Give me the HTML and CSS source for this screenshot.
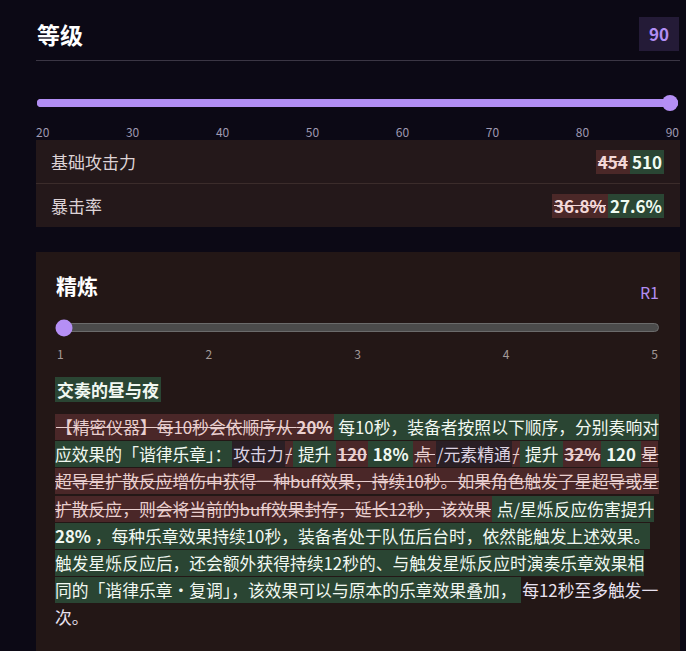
FILE: index.html
```html
<!DOCTYPE html>
<html lang="zh-CN">
<head>
<meta charset="utf-8">
<title>武器详情</title>
<link rel="stylesheet" href="styles.css">
</head>
<body>
<div class="page">
  <section class="level">
    <header class="level-head">
      <h2 class="level-title">等级</h2>
      <span class="badge">90</span>
    </header>
    <div class="slider slider-level">
      <div class="track"><div class="fill" style="width:100%"></div><span class="thumb" style="left:100%"></span></div>
    </div>
    <div class="ticks ticks-level">
      <span>20</span><span>30</span><span>40</span><span>50</span><span>60</span><span>70</span><span>80</span><span>90</span>
    </div>
  </section>

  <div class="stats">
    <div class="stat-row">
      <span class="stat-name">基础攻击力</span>
      <span class="stat-val"><del class="old">454</del><ins class="new">510</ins></span>
    </div>
    <div class="stat-row">
      <span class="stat-name">暴击率</span>
      <span class="stat-val"><del class="old">36.8%</del><ins class="new">27.6%</ins></span>
    </div>
  </div>

  <section class="card">
    <header class="card-head">
      <h3 class="card-title">精炼</h3>
      <span class="rank">R1</span>
    </header>
    <div class="slider slider-refine">
      <div class="track"><span class="thumb" style="left:0%"></span></div>
    </div>
    <div class="ticks ticks-refine">
      <span>1</span><span>2</span><span>3</span><span>4</span><span>5</span>
    </div>
    <h4 class="passive"><span class="add">交奏的昼与夜</span></h4>
    <p class="desc"><del class="rm">【精密仪器】每10秒会依顺序从 <b>20%</b></del><ins class="add"> 每10秒，装备者按照以下顺序，分别奏响对<br>应效果的「谐律乐章」：</ins><span class="keep">攻击力</span><del class="rm">/</del><ins class="add"> 提升 </ins><del class="rm"><b>120</b></del><ins class="add"> <b>18%</b> </ins><del class="rm">点 </del><span class="keep">/元素精通</span><del class="rm">/</del><ins class="add"> 提升 </ins><del class="rm"><b>32%</b></del><ins class="add"> <b>120</b> </ins><del class="rm">星<br>超导星扩散反应增伤中获得一种buff效果，持续10秒。如果角色触发了星超导或星<br>扩散反应，则会将当前的buff效果封存，延长12秒，该效果</del><ins class="add"> 点/星烁反应伤害提升<br><b>28%</b> ，每种乐章效果持续10秒，装备者处于队伍后台时，依然能触发上述效果。<br>触发星烁反应后，还会额外获得持续12秒的、与触发星烁反应时演奏乐章效果相<br>同的「谐律乐章・复调」，该效果可以与原本的乐章效果叠加， </ins><span class="plain">每12秒至多触发一<br>次。</span></p>
  </section>
</div>
</body>
</html>
```

FILE: styles.css
```css
* { box-sizing: border-box; }

html, body {
  margin: 0;
  background: #0c0915;
}

body {
  font-family: "Noto Sans CJK SC", "Noto Sans", sans-serif;
  color: #e6e0ea;
}

.page {
  padding: 17px 6px 0 36px;
}

/* level header */
.level-head {
  display: flex;
  justify-content: space-between;
  align-items: center;
  padding-bottom: 9px;
  border-bottom: 1px solid #3b3644;
}

.level-title {
  margin: 0;
  padding-left: 1px;
  font-size: 23px;
  font-weight: 700;
  color: #ffffff;
  line-height: 30px;
}

.badge {
  height: 34px;
  line-height: 34px;
  padding: 0 10px;
  margin-right: 1px;
  background: #241b37;
  color: #b28ef3;
  font-size: 17px;
  font-weight: 700;
}

/* sliders */
.slider {
  position: relative;
  display: flex;
  align-items: center;
}

.track {
  position: relative;
  width: 100%;
  border-radius: 5px;
}

.fill {
  height: 100%;
  border-radius: 5px;
  background: #b28ef3;
}

.thumb {
  position: absolute;
  top: 50%;
  border-radius: 50%;
  background: #b58ff5;
  transform: translate(-50%, -50%);
}

.slider-level {
  height: 16px;
  margin-top: 34px;
  padding-left: 1px;
  padding-right: 2px;
}

.slider-level .track {
  height: 8px;
  background: #b28ef3;
}

.slider-level .thumb {
  width: 16px;
  height: 16px;
  margin-left: -8px;
}

.slider-refine {
  height: 17px;
  margin-top: 20px;
  padding-left: 1px;
  padding-right: 1px;
}

.slider-refine .track {
  height: 9px;
  background: #4b4b4b;
  border: 1px solid #6b6b6b;
}

.slider-refine .thumb {
  width: 17px;
  height: 17px;
  margin-left: 7px;
}

/* tick labels under sliders */
.ticks {
  display: flex;
  justify-content: space-between;
  font-size: 12px;
  line-height: 14px;
  color: #9f99b2;
}

.ticks-level {
  margin-top: 14px;
  padding-right: 1px;
}

.ticks-refine {
  margin-top: 11px;
  padding: 0 2px;
  color: #a39a98;
}

/* base stats table */
.stats {
  margin-top: 1px;
  background: #24181a;
}

.stat-row {
  display: flex;
  justify-content: space-between;
  align-items: center;
  height: 43px;
  padding: 0 16px 0 15px;
}

.stat-row + .stat-row {
  height: 44px;
  border-top: 1px solid #3b2c2b;
}

.stat-name {
  font-size: 17px;
  color: #ddd3d6;
}

.stat-val {
  display: flex;
  font-size: 17px;
  font-weight: 700;
  line-height: 24px;
}

.stat-val del,
.stat-val ins {
  padding: 0 2px;
}

.old {
  background: #4b2828;
  color: #f3d8d8;
  text-decoration: line-through;
}

.new {
  background: #2a4634;
  color: #f0fbf2;
  text-decoration: none;
}

/* refinement card */
.card {
  margin-top: 25px;
  padding: 19px 20px 44px 19px;
  background: #231716;
}

.card-head {
  display: flex;
  justify-content: space-between;
  align-items: flex-end;
  padding-left: 1px;
}

.card-title {
  margin: 0;
  font-size: 21px;
  font-weight: 700;
  line-height: 28px;
  color: #ffffff;
}

.rank {
  font-size: 16px;
  line-height: 16px;
  margin-bottom: -1px;
  color: #b28ef3;
  padding-right: 1px;
}

.passive {
  margin: 16px 0 0;
  font-size: 17px;
  font-weight: 700;
  line-height: 25px;
}

.passive .add {
  display: inline-block;
  padding: 0 2px;
}

.desc {
  margin: 12px -12px 0 0;
  font-size: 16.8px;
  line-height: 27.2px;
  color: #e6dde2;
}

.desc del,
.desc ins,
.desc span {
  padding: 1px 1px;
}

.rm {
  background: #4a2728;
  color: #e9cfcf;
  text-decoration: line-through;
}

.add {
  background: #2a4533;
  color: #f1f8f1;
  text-decoration: none;
}

.keep {
  background: #2a1f25;
  color: #dcd3e2;
}

.plain {
  color: #e8e1ef;
}
```
